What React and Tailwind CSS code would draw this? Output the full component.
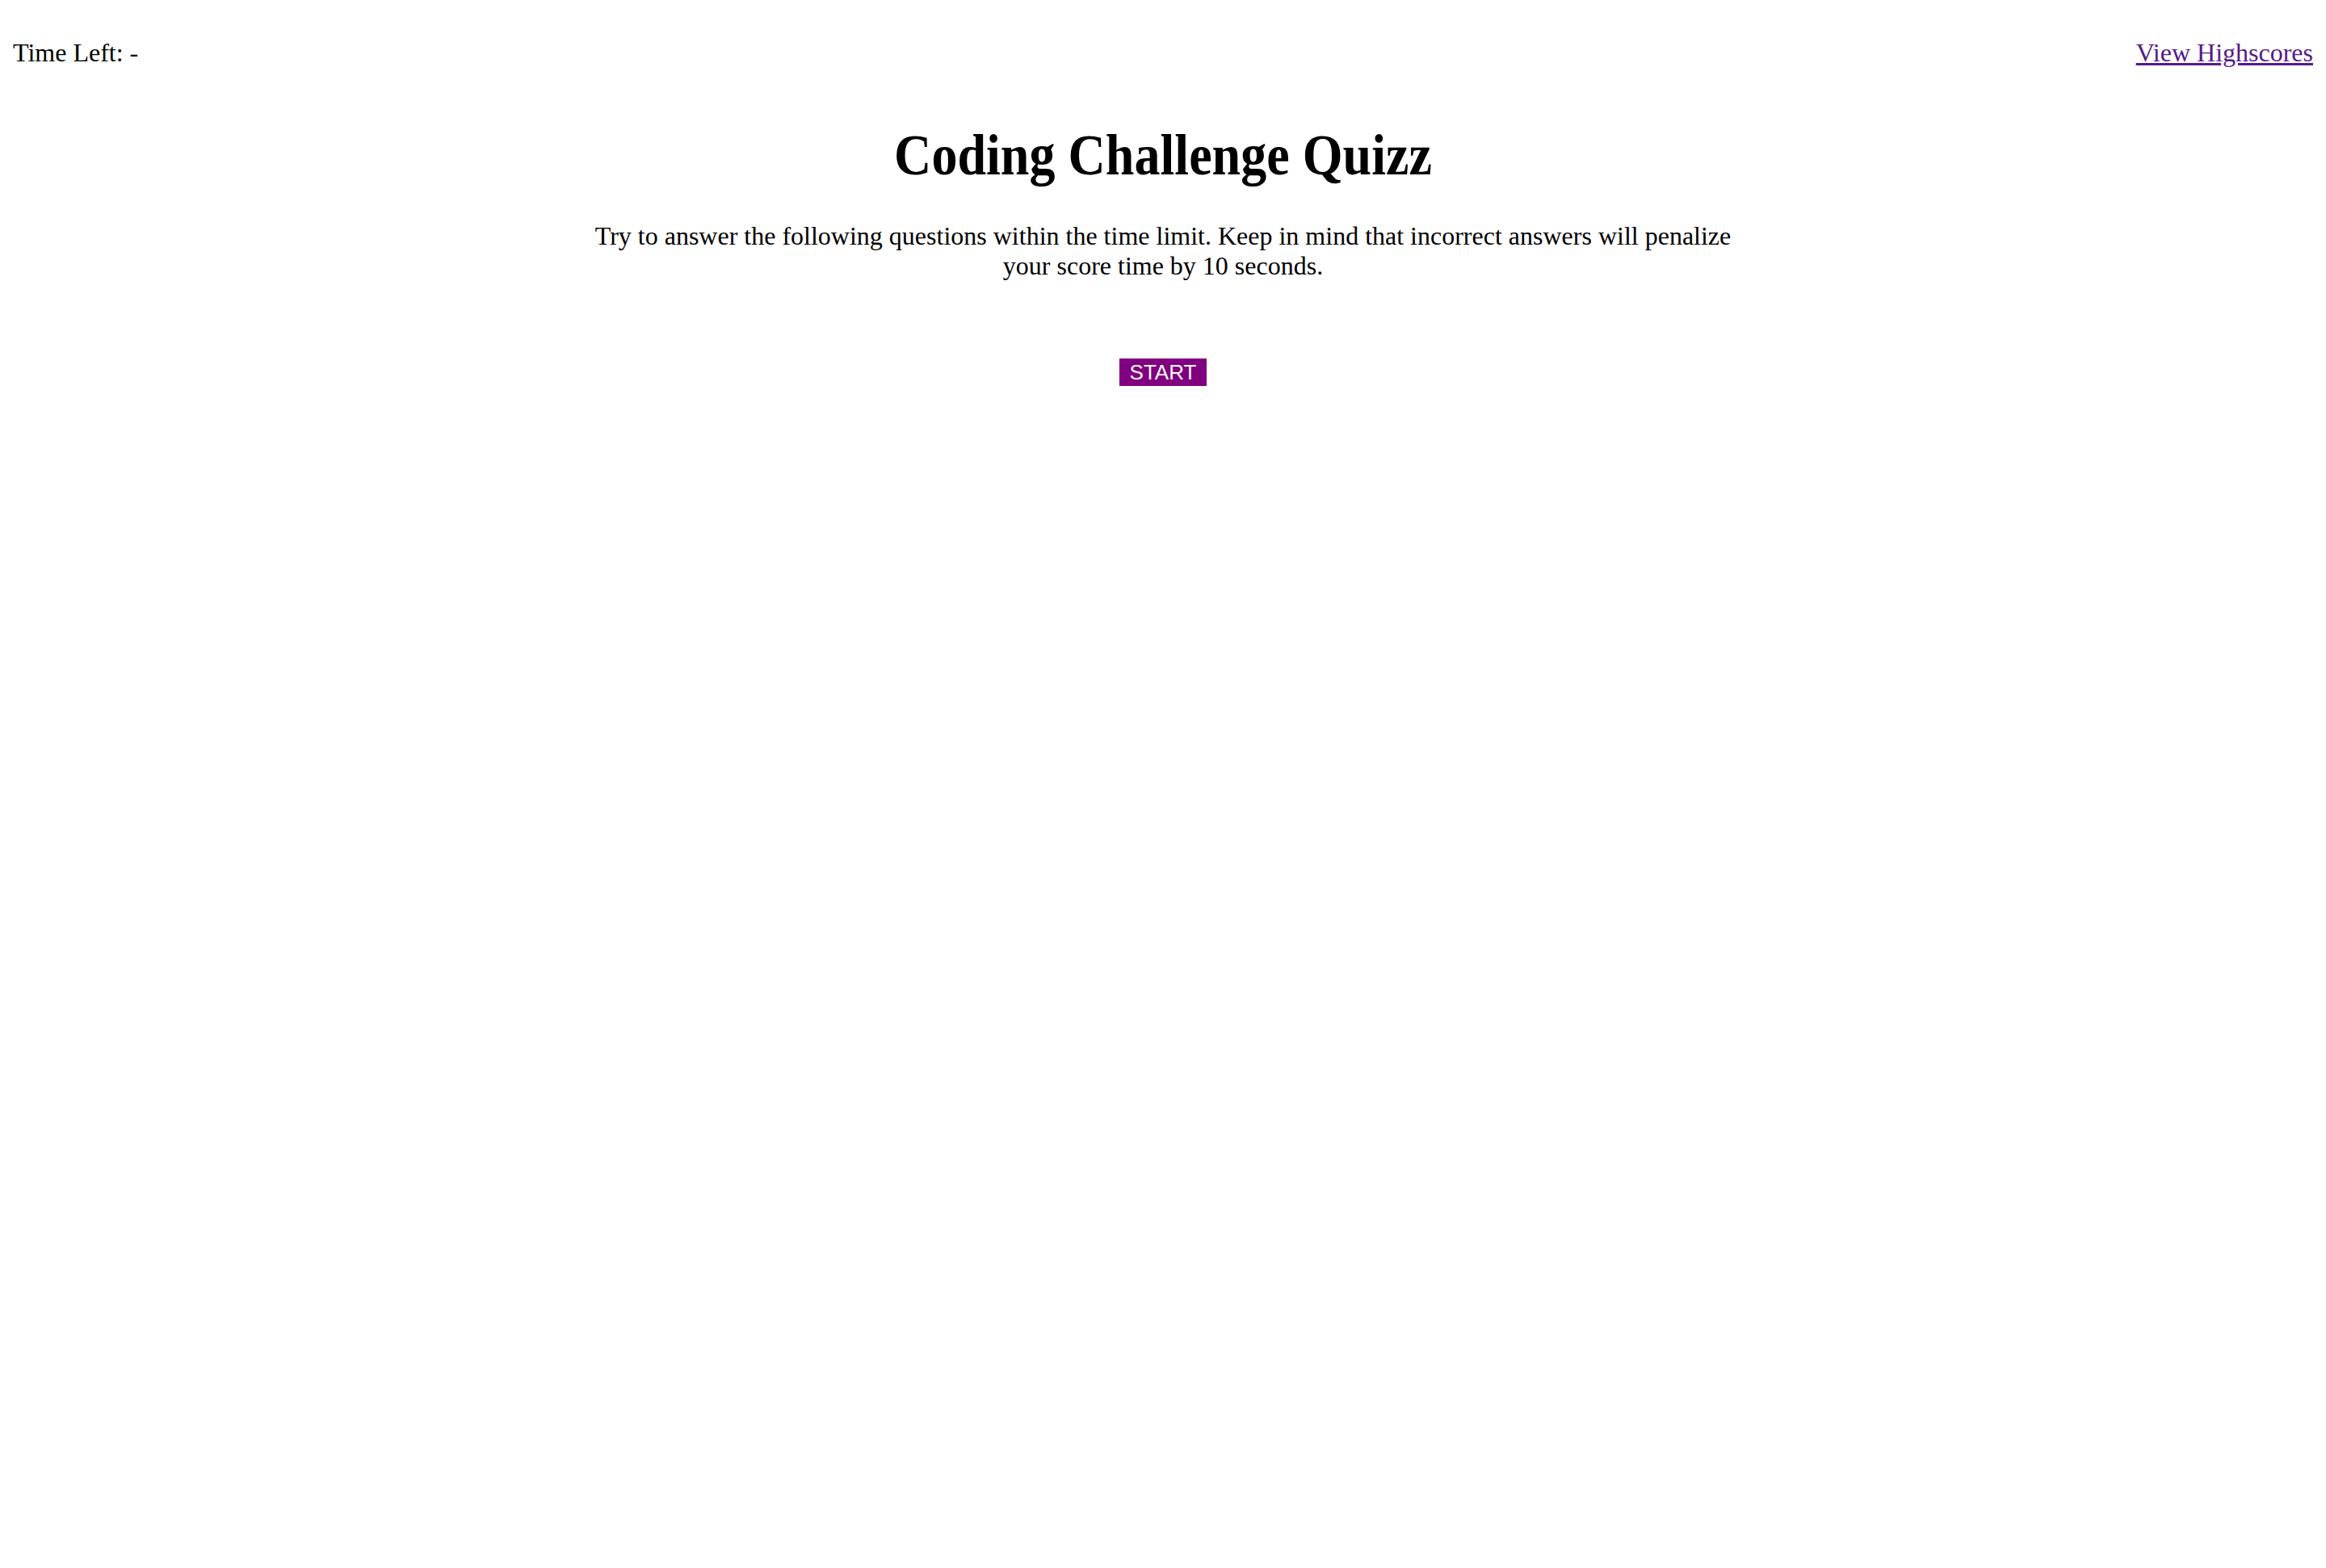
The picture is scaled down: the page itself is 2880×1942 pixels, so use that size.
export default function App() {
  return (
    <div className="min-h-screen bg-white p-4 font-['Liberation_Serif','Times_New_Roman',serif] text-black">
      {/* Top bar */}
      <header className="mt-[31px] flex items-start justify-between text-[32px] leading-[37px]">
        <span>Time Left: -</span>
        <a href="#" className="text-[#551a8b] underline">
          View Highscores
        </a>
      </header>

      {/* Intro */}
      <main className="flex flex-col items-center">
        <h1 className="mt-[67px] w-full scale-x-[0.89] text-center text-[72px] font-bold leading-[83px]">
          Coding Challenge Quizz
        </h1>
        <p className="mt-[40px] w-[1430px] text-center text-[32px] leading-[37px]">
          Try to answer the following questions within the time limit. Keep in mind that incorrect answers will
          penalize your score time by 10 seconds.
        </p>
        <button className="mt-[96px] flex h-[34px] w-[108px] items-center justify-center bg-[#800080] font-['Liberation_Sans',Arial,sans-serif] text-[26px] leading-[28px] text-white">
          START
        </button>
      </main>
    </div>
  );
}
